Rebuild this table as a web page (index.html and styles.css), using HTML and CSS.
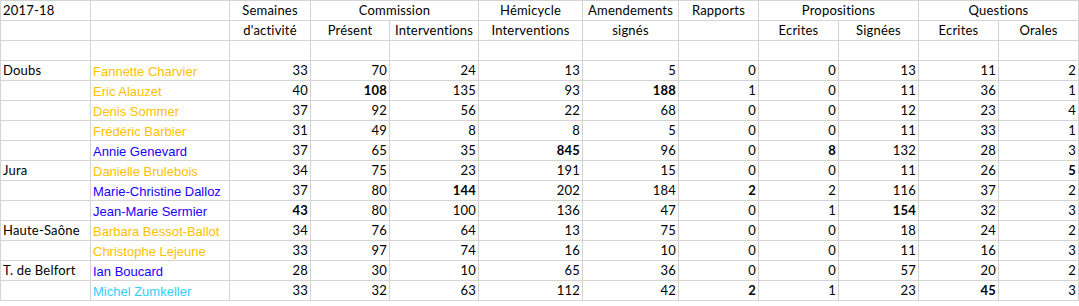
FILE: index.html
```html
<!DOCTYPE html>
<html lang="fr">
<head>
<meta charset="utf-8">
<title>2017-18</title>
<link rel="stylesheet" href="styles.css">
</head>
<body>
<div class="sheet">
  <div class="c l">2017-18</div>
  <div class="c"></div>
  <div class="c m">Semaines</div>
  <div class="c m span2">Commission</div>
  <div class="c m">Hémicycle</div>
  <div class="c m">Amendements</div>
  <div class="c m">Rapports</div>
  <div class="c m span2">Propositions</div>
  <div class="c m span2">Questions</div>

  <div class="c"></div>
  <div class="c"></div>
  <div class="c m">d'activité</div>
  <div class="c m">Présent</div>
  <div class="c m">Interventions</div>
  <div class="c m">Interventions</div>
  <div class="c m">signés</div>
  <div class="c"></div>
  <div class="c m">Ecrites</div>
  <div class="c m">Signées</div>
  <div class="c m">Ecrites</div>
  <div class="c m">Orales</div>

  <div class="c"></div><div class="c"></div><div class="c"></div><div class="c"></div><div class="c"></div><div class="c"></div><div class="c"></div><div class="c"></div><div class="c"></div><div class="c"></div><div class="c"></div><div class="c"></div>

  <div class="c l">Doubs</div><div class="c n or">Fannette Charvier</div>
  <div class="c r">33</div><div class="c r">70</div><div class="c r">24</div><div class="c r">13</div><div class="c r">5</div><div class="c r">0</div><div class="c r">0</div><div class="c r">13</div><div class="c r">11</div><div class="c r">2</div>

  <div class="c l"></div><div class="c n or">Eric Alauzet</div>
  <div class="c r">40</div><div class="c r b">108</div><div class="c r">135</div><div class="c r">93</div><div class="c r b">188</div><div class="c r">1</div><div class="c r">0</div><div class="c r">11</div><div class="c r">36</div><div class="c r">1</div>

  <div class="c l"></div><div class="c n or">Denis Sommer</div>
  <div class="c r">37</div><div class="c r">92</div><div class="c r">56</div><div class="c r">22</div><div class="c r">68</div><div class="c r">0</div><div class="c r">0</div><div class="c r">12</div><div class="c r">23</div><div class="c r">4</div>

  <div class="c l"></div><div class="c n or">Frédéric Barbier</div>
  <div class="c r">31</div><div class="c r">49</div><div class="c r">8</div><div class="c r">8</div><div class="c r">5</div><div class="c r">0</div><div class="c r">0</div><div class="c r">11</div><div class="c r">33</div><div class="c r">1</div>

  <div class="c l"></div><div class="c n bl">Annie Genevard</div>
  <div class="c r">37</div><div class="c r">65</div><div class="c r">35</div><div class="c r b">845</div><div class="c r">96</div><div class="c r">0</div><div class="c r b">8</div><div class="c r">132</div><div class="c r">28</div><div class="c r">3</div>

  <div class="c l">Jura</div><div class="c n or">Danielle Brulebois</div>
  <div class="c r">34</div><div class="c r">75</div><div class="c r">23</div><div class="c r">191</div><div class="c r">15</div><div class="c r">0</div><div class="c r">0</div><div class="c r">11</div><div class="c r">26</div><div class="c r b">5</div>

  <div class="c l"></div><div class="c n bl">Marie-Christine Dalloz</div>
  <div class="c r">37</div><div class="c r">80</div><div class="c r b">144</div><div class="c r">202</div><div class="c r">184</div><div class="c r b">2</div><div class="c r">2</div><div class="c r">116</div><div class="c r">37</div><div class="c r">2</div>

  <div class="c l"></div><div class="c n bl">Jean-Marie Sermier</div>
  <div class="c r b">43</div><div class="c r">80</div><div class="c r">100</div><div class="c r">136</div><div class="c r">47</div><div class="c r">0</div><div class="c r">1</div><div class="c r b">154</div><div class="c r">32</div><div class="c r">3</div>

  <div class="c l">Haute-Saône</div><div class="c n or">Barbara Bessot-Ballot</div>
  <div class="c r">34</div><div class="c r">76</div><div class="c r">64</div><div class="c r">13</div><div class="c r">75</div><div class="c r">0</div><div class="c r">0</div><div class="c r">18</div><div class="c r">24</div><div class="c r">2</div>

  <div class="c l"></div><div class="c n or">Christophe Lejeune</div>
  <div class="c r">33</div><div class="c r">97</div><div class="c r">74</div><div class="c r">16</div><div class="c r">10</div><div class="c r">0</div><div class="c r">0</div><div class="c r">11</div><div class="c r">16</div><div class="c r">3</div>

  <div class="c l">T. de Belfort</div><div class="c n bl">Ian Boucard</div>
  <div class="c r">28</div><div class="c r">30</div><div class="c r">10</div><div class="c r">65</div><div class="c r">36</div><div class="c r">0</div><div class="c r">0</div><div class="c r">57</div><div class="c r">20</div><div class="c r">2</div>

  <div class="c l"></div><div class="c n cy">Michel Zumkeller</div>
  <div class="c r">33</div><div class="c r">32</div><div class="c r">63</div><div class="c r">112</div><div class="c r">42</div><div class="c r b">2</div><div class="c r">1</div><div class="c r">23</div><div class="c r b">45</div><div class="c r">3</div>
</div>
</body>
</html>
```

FILE: styles.css
```css
html, body {
  margin: 0;
  padding: 0;
  background: #ffffff;
}

.sheet {
  display: grid;
  grid-template-columns: 89px 138px 80px 78px 88px 103px 95px 79px 79px 79px 79px 79px;
  grid-auto-rows: 19px;
  gap: 1px;
  padding: 1px;
  background: #d4d4d4;
  width: max-content;
  font-family: Lato, "Liberation Sans", sans-serif;
  font-size: 13px;
  letter-spacing: 0.2px;
  color: #000000;
}

.c {
  background: #ffffff;
  line-height: 19px;
  height: 19px;
  white-space: nowrap;
  overflow: hidden;
  padding: 0 2px;
}

.span2 {
  grid-column: span 2;
}

.l { text-align: left; }
.m { text-align: center; padding: 0; }
.r { text-align: right; }
.b { font-weight: 700; }

.n {
  font-family: "Liberation Sans", Arial, sans-serif;
  font-size: 13px;
  letter-spacing: 0;
  line-height: 21px;
  padding-left: 2px;
}

.or { color: #ffc000; }
.bl { color: #1a00ff; }
.cy { color: #33ccff; }
```
